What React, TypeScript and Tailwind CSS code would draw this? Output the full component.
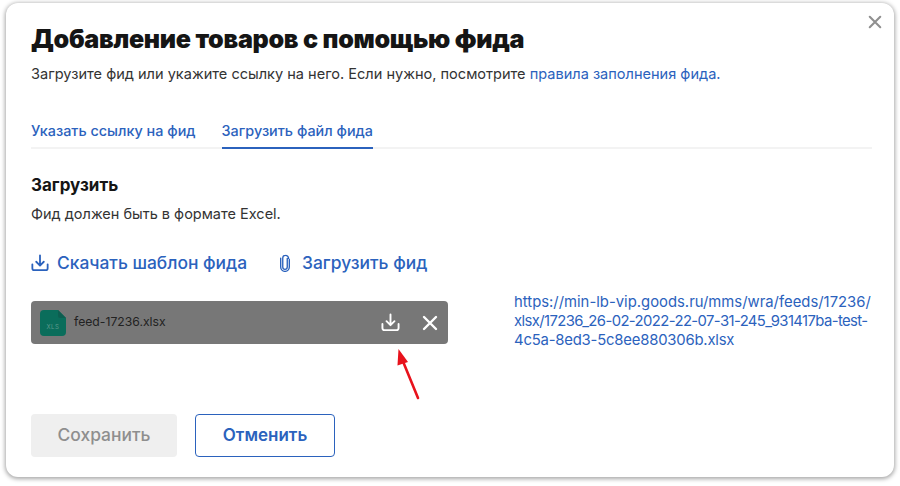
import { FC } from "react";

const DownloadIcon: FC<{ className: string }> = ({ className }) => (
  <svg viewBox="0 0 20 20" fill="none" stroke="currentColor" strokeWidth="2" strokeLinecap="round" strokeLinejoin="round" className={className}>
    <path d="M10 1.5v11M5.8 8.6l4.2 4.2 4.2-4.2" />
    <path d="M1.5 11.5v4.2c0 1.3 1 2.3 2.3 2.3h12.4c1.3 0 2.3-1 2.3-2.3v-4.2" />
  </svg>
);

const CloseIcon: FC<{ className: string }> = ({ className }) => (
  <svg viewBox="0 0 16 16" fill="none" stroke="currentColor" strokeWidth="2.4" strokeLinecap="round" className={className}>
    <path d="M2 2l12 12M14 2L2 14" />
  </svg>
);

const App: FC = () => {
  return (
    <main className="relative w-[900px] h-[486px] bg-white pt-[3px] pl-[6px] overflow-hidden font-['Inter',sans-serif]">
      <section className="relative w-[888px] h-[474px] bg-white rounded-xl shadow-[0_1px_4px_1px_rgba(0,0,0,0.35)] pl-[25px] pr-[22px] pt-[20px]">
        <button className="absolute top-[12px] right-[12px] text-[#909090]">
          <CloseIcon className="w-[14px] h-[14px]" />
        </button>
        <h1 className="text-[25.1px] leading-[32px] font-black text-[#151515] tracking-[-0.3px]">
          Добавление товаров с помощью фида
        </h1>
        <p className="mt-[9px] text-[14.55px] leading-[20px] text-[#333]">
          Загрузите фид или укажите ссылку на него. Если нужно, посмотрите{" "}
          <a className="text-[#2b62bd]">правила заполнения фида.</a>
        </p>

        <nav className="mt-[33px] flex gap-[26px] border-b-2 border-[#f3f3f3] h-[32px] text-[14.4px] font-medium text-[#2b62bd]">
          <span className="leading-[27px]">Указать ссылку на фид</span>
          <span className="leading-[27px] h-[32px] border-b-2 border-[#2b62bd]">Загрузить файл фида</span>
        </nav>

        <h2 className="mt-[25px] text-[17px] leading-[22px] font-bold text-[#151515]">Загрузить</h2>
        <p className="mt-[9px] text-[14.5px] leading-[18px] text-[#333]">Фид должен быть в формате Excel.</p>

        <div className="mt-[28px] flex items-center h-[24px] text-[17.4px] font-medium text-[#2b62bd]">
          <DownloadIcon className="w-[18px] h-[18px] mr-[8px]" />
          <span>Скачать шаблон фида</span>
          <svg viewBox="0 0 12 20" fill="none" stroke="currentColor" strokeWidth="1.5" strokeLinecap="round" className="w-[12px] h-[18px] ml-[32px] mr-[11px]">
            <path d="M8.5 5v9.5a2.5 2.5 0 0 1-5 0V4.5a3 3 0 0 1 3-3 3.4 3.4 0 0 1 3.5 3.4" />
            <path d="M10.8 6v8.5a4.8 4.8 0 0 1-9.6 0V4.5" />
          </svg>
          <span>Загрузить фид</span>
        </div>

        <div className="mt-[26px] flex items-start h-[43px]">
          <div className="w-[417px] h-[43px] shrink-0 rounded-[4px] bg-[#777777] flex items-center pl-[9px] pr-[10px]">
            <svg viewBox="0 0 26 26" className="w-[26px] h-[26px] shrink-0">
              <path d="M4 0h14l8 8v14a4 4 0 0 1-4 4H4a4 4 0 0 1-4-4V4a4 4 0 0 1 4-4z" fill="#0a6d5b" />
              <path d="M18 0l8 8h-6a2 2 0 0 1-2-2z" fill="#0d5e50" />
              <text x="13" y="19" textAnchor="middle" fontSize="6" fill="#5d9a8c" fontFamily="Inter" letterSpacing="0.6">XLS</text>
            </svg>
            <span className="ml-[8px] text-[12.2px] text-[#222]">feed-17236.xlsx</span>
            <DownloadIcon className="w-[19px] h-[19px] ml-auto text-white" />
            <CloseIcon className="w-[16px] h-[16px] ml-[22px] text-white" />
          </div>
          <a className="ml-[66px] -mt-[8px] whitespace-nowrap text-[14.85px] leading-[19px] text-[#2b62bd]">
            https://min-lb-vip.goods.ru/mms/wra/feeds/17236/
            <br />
            <span className="tracking-[-0.6px]">xlsx/17236_26-02-2022-22-07-31-245_931417ba-test-</span>
            <br />
            <span className="tracking-[-0.2px]">4c5a-8ed3-5c8ee880306b.xlsx</span>
          </a>
        </div>

        <div className="mt-[70px] flex gap-[18px]">
          <button className="w-[146px] h-[43px] rounded-[4px] bg-[#efefef] text-[17.4px] font-medium text-[#8e8e8e]">Сохранить</button>
          <button className="w-[140px] h-[43px] rounded-[4px] border border-[#2b62bd] text-[17px] font-semibold text-[#2b62bd]">Отменить</button>
        </div>
      </section>

      {/* red annotation arrow */}
      <svg viewBox="0 0 40 60" className="absolute left-[390px] top-[345px] w-[40px] h-[60px]">
        <path d="M28 53L12 14" stroke="#e8121c" strokeWidth="2.6" strokeLinecap="round" />
        <path d="M8.5 4l9.5 13-10.5 3.5z" fill="#e8121c" />
      </svg>
    </main>
  );
};

export default App;
